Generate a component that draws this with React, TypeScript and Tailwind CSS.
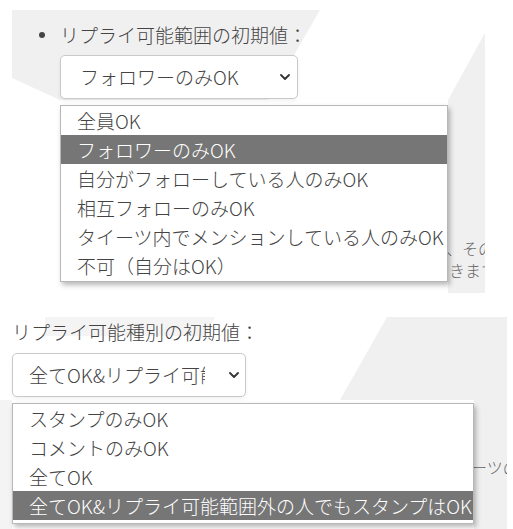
import React from 'react';

interface Option {
  label:    string;
  selected?: boolean;
}

const RANGE_OPTIONS: Option[] = [
  { label: '全員OK' },
  { label: 'フォロワーのみOK', selected: true },
  { label: '自分がフォローしている人のみOK' },
  { label: '相互フォローのみOK' },
  { label: 'タイーツ内でメンションしている人のみOK' },
  { label: '不可（自分はOK）' },
];

const TYPE_OPTIONS: Option[] = [
  { label: 'スタンプのみOK' },
  { label: 'コメントのみOK' },
  { label: '全てOK' },
  { label: '全てOK&リプライ可能範囲外の人でもスタンプはOK', selected: true },
];

function Chevron() {
  return (
    <svg width="10" height="6" viewBox="0 0 10 6" className="shrink-0">
      <path d="M1 1 L5 5 L9 1" fill="none" stroke="#333" strokeWidth="1.8" strokeLinecap="round" strokeLinejoin="round" />
    </svg>
  );
}

// background page behind the open dropdowns
function Backdrop() {
  return (
    <div className="absolute inset-0">
      <svg width="513" height="529" className="absolute inset-0">
        <polygon points="12,10 320,10 268,100 60,100 12,78" fill="#f1f0f0" />
        <polygon points="485,33 485,293 448,293 448,100" fill="#f1f0f0" />
        <polygon points="45,317 215,317 206,336 45,336" fill="#f5f4f4" />
        <polygon points="387,317 507,317 507,529 474,529 474,400 340,400" fill="#f1f0f0" />
        <polygon points="0,400 12,400 12,529 0,529" fill="#f5f4f4" />
      </svg>
      <div className="absolute left-[446px] top-[238px] w-[39px] overflow-hidden whitespace-nowrap text-[16px] leading-[20px] text-[#666]">、その</div>
      <div className="absolute left-[449px] top-[260px] w-[36px] overflow-hidden whitespace-nowrap text-[16px] leading-[20px] text-[#666]">きます</div>
      <div className="absolute left-[471px] top-[457px] w-[36px] overflow-hidden whitespace-nowrap text-[16px] leading-[20px] text-[#666]">ーツの</div>
    </div>
  );
}

function SelectBox({ value, widthClass, padClass, textClass, chevronClass }: {
  value:        string;
  widthClass:   string;
  padClass:     string;
  textClass:    string;
  chevronClass: string;
}) {
  return (
    <div className={`flex items-center h-[44px] ${widthClass} ${padClass} bg-white border border-[#c9c9c9] rounded-[5px] shadow-[0_2px_4px_rgba(0,0,0,0.06)]`}>
      <span className={`${textClass} overflow-hidden whitespace-nowrap text-[19px] text-[#444]`}>{value}</span>
      <span className={chevronClass}><Chevron /></span>
    </div>
  );
}

function OptionList({ options, widthClass, padBottom }: {
  options:    Option[];
  widthClass: string;
  padBottom:  string;
}) {
  return (
    <div className={`${widthClass} ${padBottom} bg-white border border-[#b8b8b8] shadow-[2px_3px_5px_rgba(0,0,0,0.28)]`}>
      {options.map((o) => (
        <div
          key={o.label}
          className={`h-[29px] leading-[29px] pl-[16px] text-[19px] whitespace-nowrap overflow-hidden ${
            o.selected ? 'bg-[#767676] text-white' : 'text-[#444]'
          }`}
        >
          {o.label}
        </div>
      ))}
    </div>
  );
}

export default function App() {
  return (
    <div className="relative w-[513px] h-[529px] bg-white overflow-hidden font-light font-['Noto_Sans_CJK_JP',sans-serif]">
      <Backdrop />

      <div className="relative flex flex-col">
        {/* リプライ可能範囲 */}
        <div className="pt-[21px]">
          <div className="flex items-center h-[28px] pl-[39px] gap-[15px]">
            <span className="w-[6px] h-[6px] rounded-full bg-[#444]" />
            <span className="text-[19px] text-[#444]">リプライ可能範囲の初期値：</span>
          </div>
          <div className="ml-[60px] mt-[6px] flex flex-col gap-[6px]">
            <SelectBox
              value="フォロワーのみOK"
              widthClass="w-[238px]"
              padClass="pl-[19px] pr-[7px]"
              textClass="flex-1"
              chevronClass=""
            />
            <OptionList options={RANGE_OPTIONS} widthClass="w-[388px]" padBottom="pb-[1px]" />
          </div>
        </div>

        {/* リプライ可能種別 */}
        <div className="mt-[36px] ml-[12px]">
          <div className="h-[28px] leading-[28px] text-[19px] text-[#444]">リプライ可能種別の初期値：</div>
          <div className="mt-[7px] flex flex-col gap-[6px]">
            <SelectBox
              value="全てOK&リプライ可能範囲外の人でもスタンプはOK"
              widthClass="w-[234px]"
              padClass="pl-[16px] pr-[6px]"
              textClass="w-[176px]"
              chevronClass="ml-auto"
            />
            <OptionList options={TYPE_OPTIONS} widthClass="w-[462px]" padBottom="pb-[3px]" />
          </div>
        </div>
      </div>
    </div>
  );
}
